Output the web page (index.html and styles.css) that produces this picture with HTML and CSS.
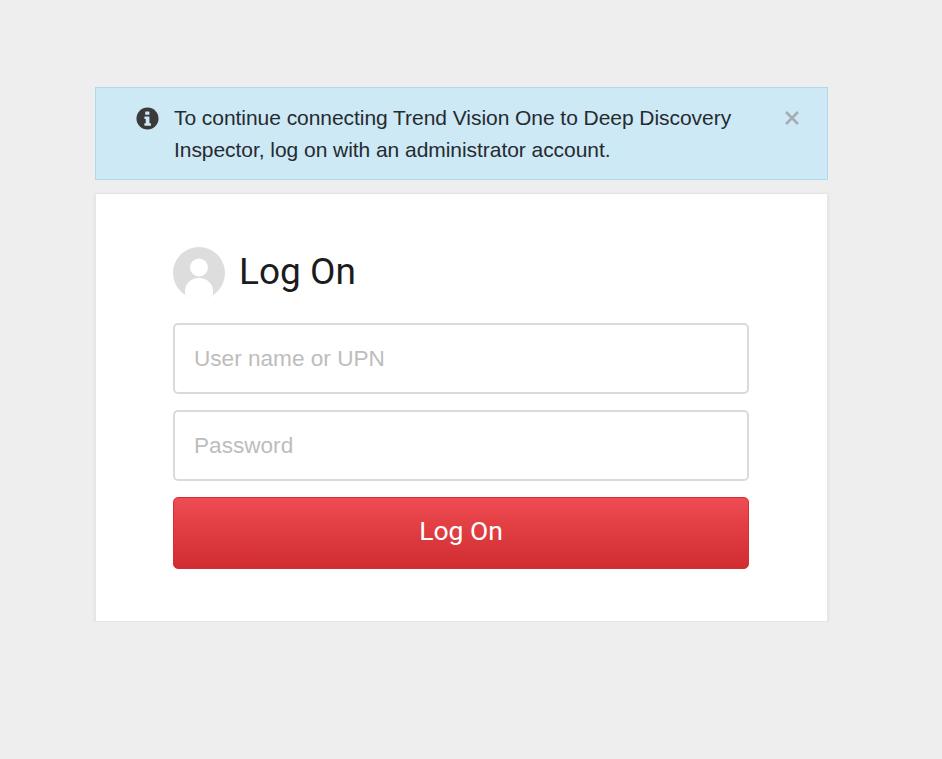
FILE: index.html
```html
<!DOCTYPE html>
<html lang="en">
  <head>
    <meta charset="UTF-8" />
    <title>Log On</title>
    <link rel="stylesheet" href="styles.css">
  </head>
  <body>
    <div class="login-wrap">
      <!-- Info message above the form -->
      <div class="alert-box">
        <svg class="alert-icon" viewBox="0 0 24 24" width="23" height="23">
          <circle cx="12" cy="12" r="11.5" fill="#3a3a3a" />
          <rect x="9.6" y="4.6" width="4.4" height="3.6" rx="0.6" fill="#cde9f5" />
          <path d="M8.8 10h5.2v7h1.6v2.6H8.8V17h1.4v-4.4H8.8z" fill="#cde9f5" />
        </svg>
        <p class="alert-text">To continue connecting Trend Vision One to Deep Discovery Inspector, log on with an administrator account.</p>
        <svg class="alert-close" viewBox="0 0 16 16" width="16" height="16">
          <path d="M2 2l12 12M14 2L2 14" stroke="#a3adb2" stroke-width="2.6" fill="none" />
        </svg>
      </div>

      <!-- Log on form -->
      <div class="login-box">
        <div class="login-title">
          <svg class="avatar" viewBox="0 0 52 52" width="52" height="52">
            <defs>
              <clipPath id="avatar-clip"><circle cx="26" cy="26" r="26" /></clipPath>
            </defs>
            <circle cx="26" cy="26" r="26" fill="#dddddd" />
            <g clip-path="url(#avatar-clip)" fill="#fff">
              <circle cx="26" cy="20.5" r="9" />
              <path d="M12 52V44c0-7 6-13 14-13s14 6 14 13v8z" />
              <rect x="0" y="50" width="52" height="2" />
            </g>
          </svg>
          <h2>Log On</h2>
        </div>
        <form class="login-form">
          <input class="user-box" type="text" placeholder="User name or UPN">
          <input class="user-box" type="password" placeholder="Password">
          <button type="button" class="login-box-button">Log On</button>
        </form>
      </div>
    </div>
  </body>
</html>
```

FILE: styles.css
```css
html {
  height: 100%;
}
body {
  margin: 0;
  padding: 87px 0 0 95px;
  background: #eeeeee;
  font-family: "Liberation Sans", Arial, sans-serif;
}

.login-wrap {
  width: 733px;
  display: flex;
  flex-direction: column;
  gap: 13px;
}

/* Info message */
.alert-box {
  display: flex;
  align-items: flex-start;
  height: 93px;
  padding: 14px 27px 0 40px;
  box-sizing: border-box;
  background: #cde9f5;
  border: 1px solid #b0d9ea;
}

.alert-icon {
  flex: none;
  margin: 5px 15px 0 0;
}

.alert-text {
  flex: 1;
  margin: 0;
  max-width: 580px;
  font-size: 21px;
  letter-spacing: -0.05px;
  line-height: 32px;
  color: #262b2f;
}

.alert-close {
  flex: none;
  margin: 8px 0 0 auto;
}

/* Form box */
.login-box {
  height: 429px;
  padding: 53px 78px 0 77px;
  box-sizing: border-box;
  background: #fff;
  border: 1px solid #e6e6e6;
  box-shadow: 0 1px 3px rgba(0, 0, 0, 0.08);
}

.login-title {
  display: flex;
  align-items: center;
  gap: 14px;
  height: 52px;
}

.login-title h2 {
  margin: 0 0 4px;
  font-family: Roboto, sans-serif;
  font-size: 37px;
  font-weight: 400;
  color: #1c1c1c;
}

.login-form {
  display: flex;
  flex-direction: column;
  gap: 16px;
  margin-top: 24px;
}

.user-box {
  height: 71px;
  padding: 0 19px;
  box-sizing: border-box;
  font-family: "Liberation Sans", Arial, sans-serif;
  font-size: 22.6px;
  color: #333;
  background: #fff;
  border: 2px solid #dadada;
  border-radius: 5px;
  outline: none;
}

.user-box::placeholder {
  color: #bdbdbd;
  opacity: 1;
}

.login-box-button {
  height: 72px;
  padding: 0 0 5px;
  font-family: Roboto, sans-serif;
  font-size: 26.5px;
  color: #fff;
  background: linear-gradient(#ee4c52, #d02c31);
  border: 1px solid #d42f35;
  border-radius: 5px;
}
```
